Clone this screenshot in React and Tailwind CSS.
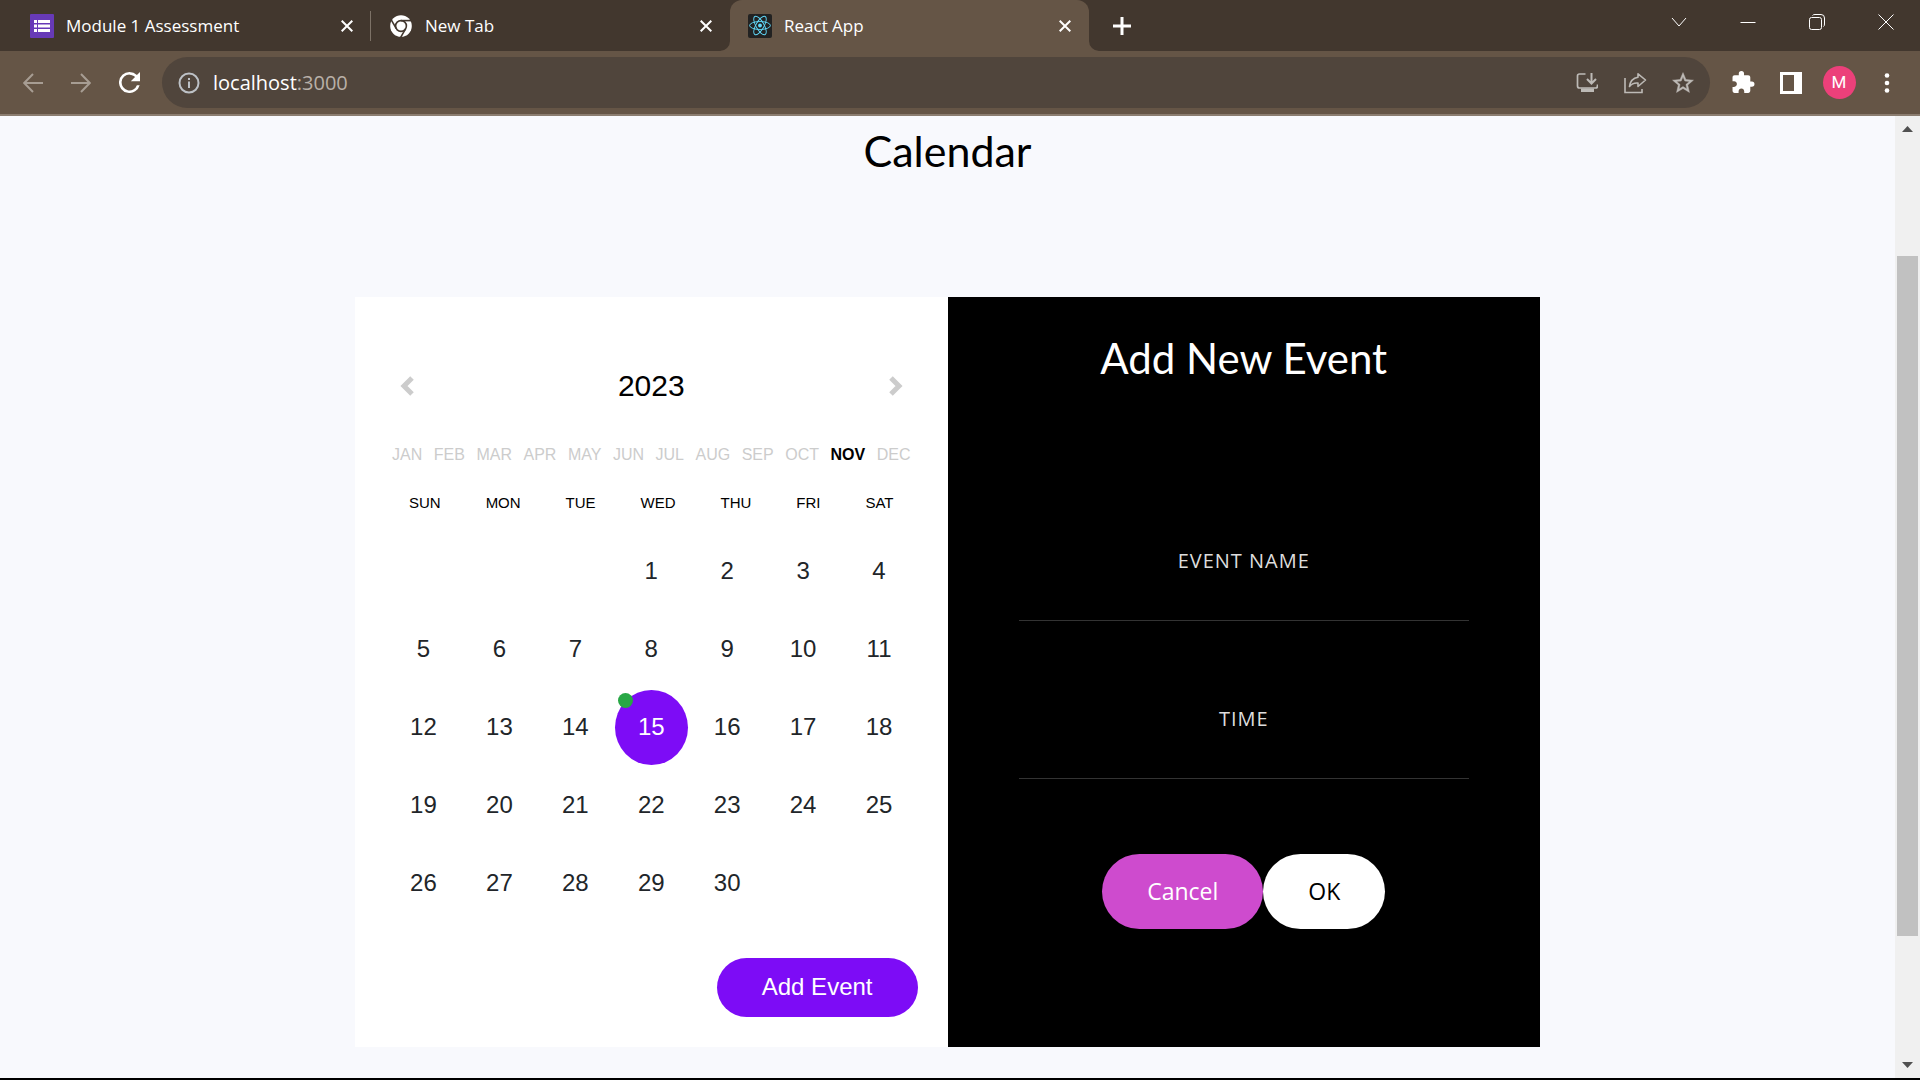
const MONTHS = ["JAN", "FEB", "MAR", "APR", "MAY", "JUN", "JUL", "AUG", "SEP", "OCT", "NOV", "DEC"];
const WEEKDAYS = ["SUN", "MON", "TUE", "WED", "THU", "FRI", "SAT"];
const LEADING_BLANKS = 3;
const DAYS = Array.from({ length: 30 }, (_, i) => i + 1);
const SELECTED_DAY = 15;

function FormsIcon() {
  return (
    <svg viewBox="0 0 24 24" className="size-6 shrink-0" aria-hidden="true">
      <rect width="24" height="24" rx="1" fill="#673ab7" />
      <g fill="#fff">
        <rect x="4" y="6" width="3" height="3" />
        <rect x="8" y="6" width="12" height="3" />
        <rect x="4" y="10.500" width="3" height="3" />
        <rect x="8" y="10.500" width="12" height="3" />
        <rect x="4" y="15" width="3" height="3" />
        <rect x="8" y="15" width="12" height="3" />
      </g>
    </svg>
  );
}

function ChromeIcon() {
  return (
    <svg viewBox="0 0 24 24" className="size-6 shrink-0" aria-hidden="true">
      <circle cx="12" cy="12" r="10.800" fill="#fff" />
      <circle cx="12" cy="12" r="5.400" fill="none" stroke="#42372e" strokeWidth="1.600" />
      <g stroke="#42372e" strokeWidth="1.600" fill="none">
        <path d="M12 6.600H22.500" />
        <path d="M7.300 14.700L2.100 5.700" />
        <path d="M16.700 14.700L11.400 23.800" />
      </g>
    </svg>
  );
}

function ReactIcon() {
  return (
    <svg viewBox="0 0 24 24" className="size-6 shrink-0" aria-hidden="true">
      <rect width="24" height="24" rx="2" fill="#222" />
      <circle cx="12" cy="11.500" r="1.900" fill="#61dafb" />
      <g fill="none" stroke="#61dafb" strokeWidth="0.900">
        <ellipse cx="12" cy="11.500" rx="10.400" ry="4" />
        <ellipse cx="12" cy="11.500" rx="10.400" ry="4" transform="rotate(60 12 11.500)" />
        <ellipse cx="12" cy="11.500" rx="10.400" ry="4" transform="rotate(120 12 11.500)" />
      </g>
    </svg>
  );
}

function TabClose({ label }) {
  return (
    <button type="button" aria-label={label} className="flex size-6 items-center justify-center">
      <svg viewBox="0 0 12 12" className="size-3" fill="none" stroke="#fff" strokeWidth="2" aria-hidden="true">
        <path d="M0.700 0.700l10.600 10.600M11.300 0.700L0.700 11.300" />
      </svg>
    </button>
  );
}

function Tab({ icon, title, active, divider }) {
  return (
    <div
      className={
        active
          ? "relative flex h-full w-[359px] items-center rounded-t-xl bg-[#655546] pl-[18px] pr-3"
          : "relative flex h-full w-[359px] items-center pl-[18px] pr-3"
      }
    >
      {icon}
      <span className="ml-3 flex-1 truncate text-[17px] text-white">{title}</span>
      <TabClose label={`Close ${title}`} />
      {divider && <span className="absolute right-0 top-[11px] h-[30px] w-px bg-[#7d7267]" />}
      {active && (
        <>
          <svg viewBox="0 0 10 10" className="absolute -left-2.5 bottom-0 size-2.5" aria-hidden="true">
            <path d="M10 0v10H0A10 10 0 0 0 10 0z" fill="#655546" />
          </svg>
          <svg viewBox="0 0 10 10" className="absolute -right-2.5 bottom-0 size-2.5" aria-hidden="true">
            <path d="M0 0v10h10A10 10 0 0 1 0 0z" fill="#655546" />
          </svg>
        </>
      )}
    </div>
  );
}

function WindowButton({ label, children }) {
  return (
    <button type="button" aria-label={label} className="flex h-[43px] w-[69px] items-center justify-center">
      <svg viewBox="0 0 16 16" className="size-4" fill="none" stroke="#fff" strokeWidth="1" aria-hidden="true">
        {children}
      </svg>
    </button>
  );
}

function ToolButton({ label, children }) {
  return (
    <button type="button" aria-label={label} className="flex h-12 w-12 shrink-0 items-center justify-center">
      {children}
    </button>
  );
}

function TabStrip() {
  return (
    <div className="flex h-[51px] bg-[#42372e] pl-3">
      <Tab icon={<FormsIcon />} title="Module 1 Assessment" divider />
      <Tab icon={<ChromeIcon />} title="New Tab" />
      <Tab icon={<ReactIcon />} title="React App" active />
      <button type="button" aria-label="New tab" className="ml-3 flex h-full w-[42px] items-center justify-center">
        <svg viewBox="0 0 18 18" className="size-[18px]" fill="none" stroke="#fff" strokeWidth="3" aria-hidden="true">
          <path d="M9 0v18M0 9h18" />
        </svg>
      </button>
      <div className="ml-auto flex">
        <WindowButton label="Search tabs">
          <path d="M1 4l7 8 7-8" />
        </WindowButton>
        <WindowButton label="Minimize">
          <path d="M0.500 8.500h15" />
        </WindowButton>
        <WindowButton label="Restore">
          <rect x="0.500" y="3.500" width="12" height="12" rx="2" />
          <path d="M3.500 1.500Q4 0.500 6 0.500h6q3.500 0 3.500 3.500v6q0 2-1 2.500" />
        </WindowButton>
        <WindowButton label="Close window">
          <path d="M0.500 0.500l15 15M15.500 0.500l-15 15" />
        </WindowButton>
      </div>
    </div>
  );
}

function Toolbar() {
  return (
    <div className="flex h-[65px] items-center border-b-2 border-[#8b7d70] bg-[#655546] px-[9px]">
      <ToolButton label="Back">
        <svg viewBox="0 0 20 20" className="size-5" fill="none" stroke="#a79d93" strokeWidth="2" aria-hidden="true">
          <path d="M20 10H1.500M10 1L1.200 10l8.800 9" />
        </svg>
      </ToolButton>
      <ToolButton label="Forward">
        <svg viewBox="0 0 20 20" className="size-5" fill="none" stroke="#a79d93" strokeWidth="2" aria-hidden="true">
          <path d="M0 10h18.500M10 1l8.800 9-8.800 9" />
        </svg>
      </ToolButton>
      <ToolButton label="Reload">
        <svg viewBox="0 0 16 16" className="size-[21px]" fill="#fff" aria-hidden="true">
          <path d="M13.650 2.350A7.960 7.960 0 0 0 8 0a8 8 0 1 0 7.730 10h-2.080A6 6 0 1 1 8 2c1.660 0 3.140.69 4.220 1.780L9 7h7V0z" />
        </svg>
      </ToolButton>
      <div className="ml-[9px] flex h-[51px] flex-1 items-center rounded-full bg-[#50453c] pl-4 pr-[3px]">
        <svg viewBox="0 0 22 22" className="size-[22px] shrink-0" aria-hidden="true">
          <circle cx="11" cy="11" r="9.500" fill="none" stroke="#bdc1c6" strokeWidth="2" />
          <path d="M10 6h2v2h-2zM10 9.500h2V16h-2z" fill="#bdc1c6" />
        </svg>
        <div className="relative ml-[13px] flex-1 text-[20px] leading-7">
          <span aria-hidden="true" className="text-white">
            localhost<span className="text-[#b9b0a8]">:3000</span>
          </span>
          <input
            type="text"
            aria-label="Address"
            className="absolute inset-0 w-full bg-transparent text-transparent outline-none"
          />
        </div>
        <ToolButton label="Install app">
          <svg viewBox="0 0 22 22" className="size-[22px]" fill="none" stroke="#bdbab6" strokeWidth="1.700" aria-hidden="true">
            <path d="M9.500 2H3.500Q1.500 2 1.500 4v10q0 2 2 2h16q2 0 2-2v-1.500" />
            <path d="M15.500 1v10M11 7l4.500 4.500L20 7" strokeWidth="2" />
            <path d="M5 16.500h13V20H5z" fill="#bdbab6" stroke="none" />
          </svg>
        </ToolButton>
        <ToolButton label="Share">
          <svg viewBox="0 0 23 22" className="h-[22px] w-[23px]" fill="none" stroke="#bdbab6" strokeWidth="1.600" aria-hidden="true">
            <path d="M1 6v14.500h17V17" />
            <path d="M14 1.800L21.500 8 14 14.500V11q-5.500-.5-8.500 3.500Q6.500 6.500 14 5.300z" strokeLinejoin="round" />
          </svg>
        </ToolButton>
        <ToolButton label="Bookmark">
          <svg
            viewBox="1.500 1.500 21 20"
            className="h-[21px] w-[22px]"
            fill="#bdbab6"
            stroke="#bdbab6"
            strokeWidth="0.400"
            aria-hidden="true"
          >
            <path d="M22 9.240l-7.190-.62L12 2 9.190 8.630 2 9.240l5.460 4.730L5.820 21 12 17.270 18.180 21l-1.630-7.030L22 9.240zM12 15.400l-3.760 2.270 1-4.280-3.320-2.880 4.380-.38L12 6.100l1.710 4.040 4.380.38-3.320 2.880 1 4.280L12 15.400z" />
          </svg>
        </ToolButton>
      </div>
      <div className="ml-[9px] flex">
        <ToolButton label="Extensions">
          <svg viewBox="1.500 1 22 22" className="size-[23px]" fill="#fff" aria-hidden="true">
            <path d="M20.500 11H19V7c0-1.100-.9-2-2-2h-4V3.500a2.500 2.500 0 0 0-5 0V5H4c-1.100 0-2 .9-2 2v3.800h1.500c1.500 0 2.700 1.200 2.700 2.700S5 16.200 3.500 16.200H2V20c0 1.100.9 2 2 2h3.800v-1.500c0-1.500 1.200-2.700 2.700-2.700s2.700 1.200 2.700 2.700V22H17c1.100 0 2-.9 2-2v-4h1.500a2.500 2.500 0 0 0 0-5z" />
          </svg>
        </ToolButton>
        <ToolButton label="Side panel">
          <svg viewBox="0 0 22 22" className="size-[22px]" aria-hidden="true">
            <path d="M0 0h22v22H0zM3 3v16h11V3z" fill="#fff" fillRule="evenodd" />
          </svg>
        </ToolButton>
        <ToolButton label="Profile">
          <span className="flex size-[33px] items-center justify-center rounded-full bg-[#ec407a] font-[Roboto,sans-serif] text-[17px] text-white">
            M
          </span>
        </ToolButton>
        <ToolButton label="Menu">
          <svg viewBox="0 0 6 20" className="h-5 w-1.5" fill="#fff" aria-hidden="true">
            <circle cx="3" cy="2.500" r="2.300" />
            <circle cx="3" cy="10" r="2.300" />
            <circle cx="3" cy="17.500" r="2.300" />
          </svg>
        </ToolButton>
      </div>
    </div>
  );
}

function YearArrow({ label, d }) {
  return (
    <button type="button" aria-label={label} className="flex h-9 w-8 items-center justify-center">
      <svg viewBox="0 0 14 20" className="h-5 w-3.5" fill="none" stroke="#ccc" strokeWidth="5" aria-hidden="true">
        <path d={d} />
      </svg>
    </button>
  );
}

function CalendarPanel() {
  return (
    <section className="flex flex-col bg-white px-8 pt-[71px] font-['Liberation_Sans',Arial,sans-serif]">
      <div className="flex items-center justify-between px-1">
        <YearArrow label="Previous year" d="M12 2L4 10l8 8" />
        <div className="text-[30px] leading-9 text-black">2023</div>
        <YearArrow label="Next year" d="M2 2l8 8-8 8" />
      </div>
      <div className="mt-[39px] flex justify-between px-[5px] text-[16px] leading-6">
        {MONTHS.map((m) => (
          <button
            key={m}
            type="button"
            className={m === "NOV" ? "font-bold text-black" : "text-[#ccc]"}
          >
            {m}
          </button>
        ))}
      </div>
      <div className="mt-6 flex justify-between px-[22px] text-[15px] leading-6 text-black">
        {WEEKDAYS.map((d) => (
          <span key={d}>{d}</span>
        ))}
      </div>
      <div className="mt-[19px] grid grid-cols-7 gap-[3px]">
        {Array.from({ length: LEADING_BLANKS }, (_, i) => (
          <span key={`blank-${i}`} />
        ))}
        {DAYS.map((d) => (
          <button
            key={d}
            type="button"
            className={
              d === SELECTED_DAY
                ? "relative h-[75px] rounded-[50%] bg-[#7d0cf6] pb-0.5 text-2xl text-white"
                : "relative h-[75px] rounded-[50%] pb-0.5 text-2xl text-[#212529]"
            }
          >
            {d}
            {d === SELECTED_DAY && (
              <span className="absolute left-[3px] top-[3px] size-[15px] rounded-full bg-[#28a745]" />
            )}
          </button>
        ))}
      </div>
      <button
        type="button"
        className="mb-[30px] mr-[-2px] mt-auto h-[59px] self-end rounded-full bg-[#7d0cf6] px-[45px] pb-0.5 text-2xl text-white"
      >
        Add Event
      </button>
    </section>
  );
}

function Field({ id, label }) {
  return (
    <div className="flex flex-col pt-[43px]">
      <label htmlFor={id} className="text-center text-[20px] leading-7 tracking-[1px] text-[#ddd]">
        {label}
      </label>
      <input
        id={id}
        type="text"
        className="h-[46px] w-full border-b border-[#333] bg-transparent text-center text-[20px] text-white outline-none"
      />
    </div>
  );
}

function EventPanel() {
  return (
    <section className="flex flex-col items-center bg-black px-[71px] pt-[31px]">
      <h2 className="font-[Lato,sans-serif] text-[42px] leading-[60px] text-white">Add New Event</h2>
      <form className="mt-[116px] flex w-full flex-col items-center">
        <div className="flex w-full flex-col gap-[41px]">
          <Field id="event-name" label="EVENT NAME" />
          <Field id="event-time" label="TIME" />
        </div>
        <div className="mt-[75px] flex">
          <button type="button" className="h-[75px] rounded-full bg-[#ce4bce] px-[45px] text-[23px] text-white">
            Cancel
          </button>
          <button type="button" className="h-[75px] rounded-full bg-white px-[45px] text-[23px] text-black">
            OK
          </button>
        </div>
      </form>
    </section>
  );
}

function ScrollRail() {
  return (
    <div className="flex w-[25px] flex-col items-center bg-[#f0f0f0] py-2.5" aria-hidden="true">
      <svg viewBox="0 0 11 6" className="h-1.5 w-[11px]" fill="#505050">
        <path d="M5.500 0L11 6H0z" />
      </svg>
      <div className="flex w-full flex-1 flex-col items-center pt-[124px] pb-[126px]">
        <div className="w-[21px] flex-1 bg-[#c1c1c1]" />
      </div>
      <svg viewBox="0 0 11 6" className="h-1.5 w-[11px]" fill="#505050">
        <path d="M5.500 6L0 0h11z" />
      </svg>
    </div>
  );
}

export default function App() {
  return (
    <div className="flex min-h-screen flex-col border-b-2 border-black bg-[#f8f9fd] font-['Open_Sans','Noto_Sans',sans-serif]">
      <header>
        <TabStrip />
        <Toolbar />
      </header>
      <div className="flex flex-1">
        <main className="flex flex-1 flex-col items-center pb-[31px] pt-[5px]">
          <h1 className="font-[Lato,sans-serif] text-[43px] leading-[60px] text-black">Calendar</h1>
          <div className="mt-[116px] grid w-full max-w-[1185px] flex-1 grid-cols-2">
            <CalendarPanel />
            <EventPanel />
          </div>
        </main>
        <ScrollRail />
      </div>
    </div>
  );
}
